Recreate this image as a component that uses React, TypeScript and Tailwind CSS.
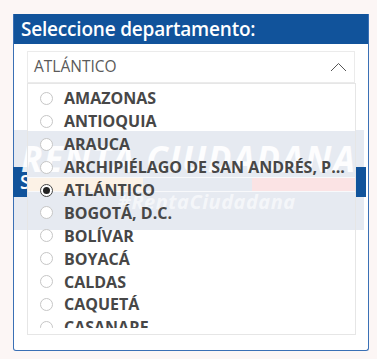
import type { ReactElement } from "react";

const departamentos = [
  "AMAZONAS",
  "ANTIOQUIA",
  "ARAUCA",
  "ARCHIPIÉLAGO DE SAN ANDRÉS, P...",
  "ATLÁNTICO",
  "BOGOTÁ, D.C.",
  "BOLÍVAR",
  "BOYACÁ",
  "CALDAS",
  "CAQUETÁ",
  "CASANARE",
];

const selected = "ATLÁNTICO";

function Radio({ checked }: { checked: boolean }): ReactElement {
  return (
    <span
      className={`flex h-[13px] w-[13px] shrink-0 items-center justify-center rounded-full border bg-white ${
        checked ? "border-[#444]" : "border-[#c6c6c6]"
      }`}
    >
      {checked && <span className="h-[7px] w-[7px] rounded-full bg-[#222]" />}
    </span>
  );
}

export default function App(): ReactElement {
  return (
    <div className="relative h-[359px] w-[377px] overflow-hidden bg-[#fcf6f5] pl-[13px] pt-[14px] font-['Open_Sans',sans-serif]">
      {/* slicer */}
      <div className="flex h-[337px] w-[356px] flex-col rounded-b-[3px] border border-t-0 border-[#3a70b5] bg-white">
        <div className="flex h-[30px] items-center bg-[#11539b] px-[7px]">
          <span className="text-[19px] font-semibold leading-none tracking-[-0.2px] text-white">
            Seleccione departamento:
          </span>
        </div>
        <div className="px-[13px] pt-[7px]">
          <div className="flex h-[32px] items-center justify-between border border-[#ebebeb] pl-[6px] pr-[7px]">
            <span className="text-[15.5px] text-[#5a5a5a]">{selected}</span>
            <svg width="17" height="10" viewBox="0 0 17 10" fill="none">
              <path d="M1 9 L8.5 1.5 L16 9" stroke="#555" strokeWidth="1" />
            </svg>
          </div>
        </div>
      </div>

      {/* imagen de fondo superpuesta */}
      <div className="pointer-events-none absolute left-[14px] top-[130px] h-[100px] w-[350px] bg-[#e6eaf1]" />
      <div className="pointer-events-none absolute left-[13px] top-[167px] flex h-[30px] w-[15px] items-center overflow-hidden bg-[#11539b] pl-[7px]">
        <span className="text-[19px] font-semibold leading-none text-white">S</span>
      </div>
      <div className="pointer-events-none absolute left-[356px] top-[167px] h-[30px] w-[10px] bg-[#11539b]" />
      <div className="pointer-events-none absolute left-[27px] top-[177px] h-[15px] w-[329px] border-y border-white/70">
        <div className="absolute left-0 top-0 h-full w-[116px] bg-[#fcf2e6]" />
        <div className="absolute left-[225px] top-0 h-full w-[104px] bg-[#fbe3e4]" />
      </div>
      <span className="pointer-events-none absolute left-[21px] top-[141px] whitespace-nowrap text-[35px] font-bold italic leading-none tracking-[1.5px] text-white/90">
        RENTA CIUDADANA
      </span>
      <span className="pointer-events-none absolute left-[118px] top-[192px] whitespace-nowrap text-[20px] font-bold italic leading-none tracking-[0.5px] text-white/60">
        #RentaCiudadana
      </span>

      {/* lista desplegada */}
      <div className="absolute left-[27px] top-[83px] h-[252px] w-[329px] border border-[#e6e6e6] bg-[linear-gradient(to_bottom,white_47px,transparent_47px,transparent_147px,white_147px)] pb-[6px]">
        <div className="h-full overflow-hidden pt-[3px]">
          {departamentos.map((d) => (
            <div key={d} className="flex h-[22.9px] items-center gap-[11px] pl-[12px]">
              <Radio checked={d === selected} />
              <span className="whitespace-nowrap text-[16px] font-bold leading-none text-[#474747]">
                {d}
              </span>
            </div>
          ))}
        </div>
      </div>
    </div>
  );
}
